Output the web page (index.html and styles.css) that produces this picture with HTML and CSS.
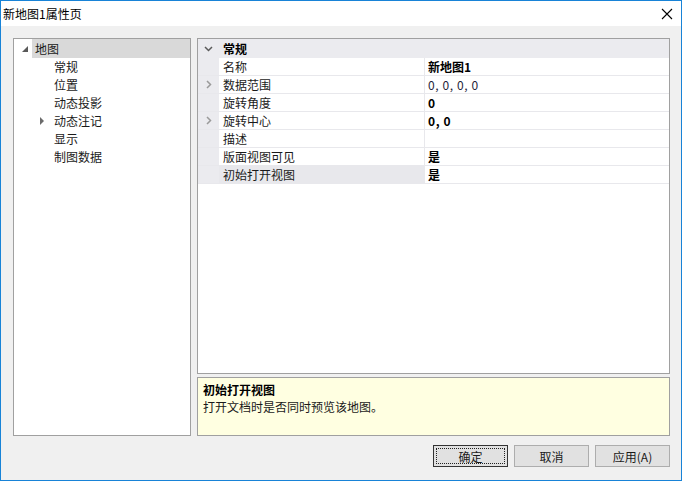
FILE: index.html
```html
<!DOCTYPE html>
<html>
<head>
<meta charset="utf-8">
<link rel="stylesheet" href="styles.css">
</head>
<body>
<div class="window">
  <div class="titlebar">
    <span class="title">新地图1属性页</span>
    <svg class="close" width="12" height="12" viewBox="0 0 12 12"><path d="M1 1 L11 11 M11 1 L1 11" stroke="#000" stroke-width="1.1" fill="none"/></svg>
  </div>
  <div class="body">
    <div class="main">
      <div class="tree">
        <div class="tnode sel-row">
          <span class="twisty"><svg width="6" height="6" viewBox="0 0 6 6"><path d="M6 0 L6 6 L0 6 Z" fill="#595959"/></svg></span>
          <span class="tlabel sel">地图</span>
        </div>
        <div class="tnode child"><span class="twisty"></span><span class="tlabel">常规</span></div>
        <div class="tnode child"><span class="twisty"></span><span class="tlabel">位置</span></div>
        <div class="tnode child"><span class="twisty"></span><span class="tlabel">动态投影</span></div>
        <div class="tnode child"><span class="twisty"><svg width="5" height="8" viewBox="0 0 5 8"><path d="M0 0 L4 4 L0 8 Z" fill="#6b6b6b"/></svg></span><span class="tlabel">动态注记</span></div>
        <div class="tnode child"><span class="twisty"></span><span class="tlabel">显示</span></div>
        <div class="tnode child"><span class="twisty"></span><span class="tlabel">制图数据</span></div>
      </div>
      <div class="right">
        <div class="grid">
          <div class="cat">
            <span class="gut"><svg width="9" height="6" viewBox="0 0 9 6"><path d="M1 1 L4.5 4.5 L8 1" stroke="#5a5a5a" stroke-width="1.5" fill="none"/></svg></span>
            <span class="catname">常规</span>
          </div>
          <div class="row"><span class="gut"></span><span class="name">名称</span><span class="val b">新地图1</span></div>
          <div class="row"><span class="gut"><svg width="6" height="9" viewBox="0 0 6 9"><path d="M1 1 L4.5 4.5 L1 8" stroke="#9a9a9a" stroke-width="1.5" fill="none"/></svg></span><span class="name">数据范围</span><span class="val wide">0, 0, 0, 0</span></div>
          <div class="row"><span class="gut"></span><span class="name">旋转角度</span><span class="val b">0</span></div>
          <div class="row"><span class="gut"><svg width="6" height="9" viewBox="0 0 6 9"><path d="M1 1 L4.5 4.5 L1 8" stroke="#9a9a9a" stroke-width="1.5" fill="none"/></svg></span><span class="name">旋转中心</span><span class="val b wide">0, 0</span></div>
          <div class="row"><span class="gut"></span><span class="name">描述</span><span class="val"></span></div>
          <div class="row"><span class="gut"></span><span class="name">版面视图可见</span><span class="val b">是</span></div>
          <div class="row selected"><span class="gut"></span><span class="name">初始打开视图</span><span class="val b">是</span></div>
        </div>
        <div class="desc">
          <div class="dtitle">初始打开视图</div>
          <div class="dtext">打开文档时是否同时预览该地图。</div>
        </div>
      </div>
    </div>
    <div class="buttons">
      <button class="btn default"><span class="focus">确定</span></button>
      <button class="btn">取消</button>
      <button class="btn">应用(A)</button>
    </div>
  </div>
</div>
</body>
</html>
```
FILE: styles.css
```css
* { box-sizing: border-box; }
html, body { margin: 0; padding: 0; }
body {
  width: 682px; height: 481px;
  font-family: "Noto Sans CJK SC", "Microsoft YaHei", sans-serif;
  font-size: 12px;
  color: #000;
  background: #fff;
}
.window {
  width: 682px; height: 481px;
  border: 1px solid #1883d7;
  display: flex; flex-direction: column;
  background: #f0f0f0;
}
.titlebar {
  height: 25px; background: #fff;
  display: flex; align-items: center; justify-content: space-between;
  padding: 0 8px 0 2px;
}
.title { font-size: 12px; color: #000; line-height: 16px; }
.close { display: block; margin-top: 1px; }
.body {
  flex: 1;
  padding: 12px 11px 13px 12px;
  display: flex; flex-direction: column;
}
.main { display: flex; gap: 6px; height: 398px; }
.tree {
  width: 178px; height: 398px;
  background: #fff; border: 1px solid #a0a0a0;
}
.tnode { display: flex; align-items: center; height: 18px; }
.tnode.sel-row { height: 19px; }
.twisty { width: 18px; height: 18px; display: flex; align-items: center; justify-content: center; flex: none; }
.sel-row .twisty { padding-left: 3px; }
.tlabel { line-height: 18px; height: 18px; padding-left: 3px; white-space: nowrap; color: #1a1a1a; }
.tlabel.sel { background: #d9d9d9; flex: 1; height: 19px; line-height: 19px; }
.child .twisty { margin-left: 19px; }
.right { flex: 1; display: flex; flex-direction: column; gap: 3px; }
.grid {
  height: 336px; background: #fff; border: 1px solid #a0a0a0;
}
.cat { display: flex; height: 19px; background: #ebebef; align-items: center; }
.gut { width: 21px; height: 100%; flex: none; display: flex; align-items: center; justify-content: center; }
.catname { font-weight: bold; padding-left: 4px; line-height: 18px; }
.row { display: flex; height: 18px; border-bottom: 1px solid #e8e8ec; }
.row .gut { background: #ebebef; }
.name { width: 206px; flex: none; padding-left: 4px; line-height: 17px; border-right: 1px solid #e8e8ec; color: #1a1a1a; }
.val { flex: 1; padding-left: 3px; line-height: 17px; color: #1f1f3a; }
.val.wide { letter-spacing: 0.6px; }
.val.b { font-weight: bold; color: #000; }
.row.selected .name { background: #e8e8ec; }
.desc {
  height: 59px; background: #ffffe1; border: 1px solid #a0a0a0;
  padding: 3px 5px;
}
.dtitle { font-weight: bold; line-height: 17px; }
.dtext { line-height: 17px; color: #1a1a1a; }
.buttons {
  margin-top: 9px; display: flex; justify-content: flex-end; gap: 6px;
}
.btn {
  width: 75px; height: 22px; padding: 0;
  background: #e1e1e1; border: 1px solid #adadad;
  font-family: inherit; font-size: 12px; color: #1a1a1a;
  display: flex; align-items: center; justify-content: center;
}
.btn.default { border: 1px solid #333; padding: 2px; }
.focus {
  width: 100%; height: 100%;
  border: 1px dotted #222;
  display: flex; align-items: center; justify-content: center;
}
```
